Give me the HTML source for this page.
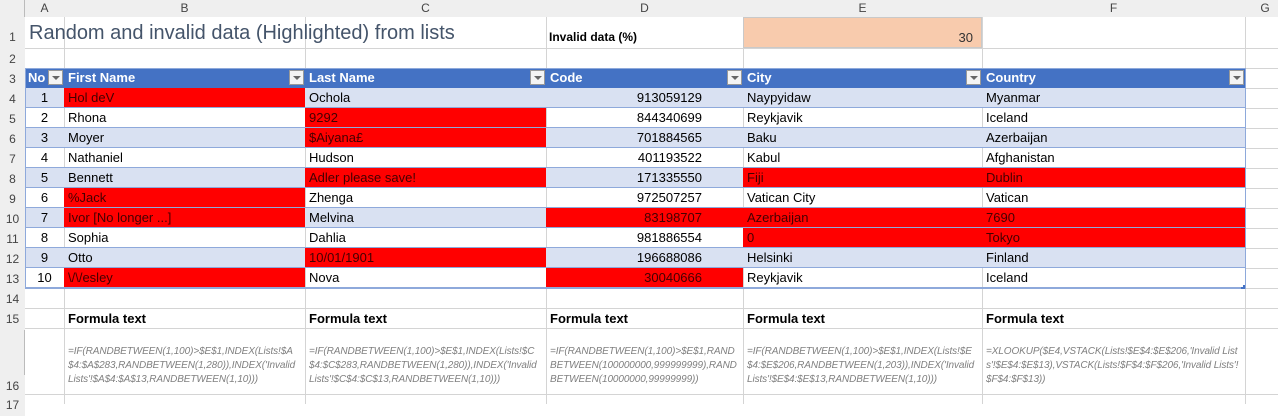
<!DOCTYPE html><html><head><style>
body{margin:0;width:1278px;height:404px;overflow:hidden;background:#fff;font-family:"Liberation Sans",sans-serif;font-size:13px;position:relative}
div{position:absolute;box-sizing:border-box;white-space:nowrap;overflow:hidden}
.h{background:#efefef;color:#444;text-align:center;font-size:12px;line-height:17px}
.rn{background:#efefef;color:#444;text-align:center;font-size:12px;left:0;width:25px}
.c{padding-left:4px;line-height:20px;color:#000}
.hd{background:#4472C4;color:#fff;font-weight:bold}
.b{background:#D9E1F2}
.r{background:#FF0000;color:#400}
.dd{width:15px;height:15px;background:#f4f4f4;border:1px solid #999;top:2px}
.dd:after{content:"";position:absolute;left:3px;top:5px;border-left:4px solid transparent;border-right:4px solid transparent;border-top:4px solid #666}
.f{font-style:italic;color:#808080;font-size:10px;line-height:14px;white-space:normal;padding:17px 2px 0 3px;word-break:break-all;letter-spacing:-0.1px}
</style></head><body>
<div style="left:0;top:0;width:1278px;height:17px;background:#efefef;border-bottom:1px solid #bbb"></div>
<div style="left:0;top:0;width:25px;height:404px;background:#efefef;border-right:1px solid #bbb"></div>
<div class="h" style="left:25px;width:39px;top:0">A</div>
<div class="h" style="left:64px;width:241px;top:0">B</div>
<div class="h" style="left:305px;width:241px;top:0">C</div>
<div class="h" style="left:546px;width:197px;top:0">D</div>
<div class="h" style="left:743px;width:239px;top:0">E</div>
<div class="h" style="left:982px;width:263px;top:0">F</div>
<div class="h" style="left:1245px;width:40px;top:0">G</div>
<svg style="position:absolute;left:0;top:0" width="1278" height="404">
<g stroke="#d4d4d4" stroke-width="1">
<line x1="25" y1="48.5" x2="1278" y2="48.5"/><line x1="25" y1="68.5" x2="1278" y2="68.5"/>
<line x1="25" y1="288.5" x2="1278" y2="288.5"/><line x1="25" y1="308.5" x2="1278" y2="308.5"/>
<line x1="25" y1="328.5" x2="1278" y2="328.5"/><line x1="25" y1="394.5" x2="1278" y2="394.5"/>
<line x1="64.5" y1="17" x2="64.5" y2="404"/><line x1="305.5" y1="17" x2="305.5" y2="404"/>
<line x1="546.5" y1="17" x2="546.5" y2="404"/><line x1="743.5" y1="17" x2="743.5" y2="404"/>
<line x1="982.5" y1="17" x2="982.5" y2="404"/><line x1="1245.5" y1="17" x2="1245.5" y2="404"/>
</g>
<g stroke="#d4d4d4"><line x1="1245" y1="88.5" x2="1278" y2="88.5"/><line x1="1245" y1="108.5" x2="1278" y2="108.5"/><line x1="1245" y1="128.5" x2="1278" y2="128.5"/><line x1="1245" y1="148.5" x2="1278" y2="148.5"/><line x1="1245" y1="168.5" x2="1278" y2="168.5"/><line x1="1245" y1="188.5" x2="1278" y2="188.5"/><line x1="1245" y1="208.5" x2="1278" y2="208.5"/><line x1="1245" y1="228.5" x2="1278" y2="228.5"/><line x1="1245" y1="248.5" x2="1278" y2="248.5"/><line x1="1245" y1="268.5" x2="1278" y2="268.5"/></g>
</svg>
<div class="rn" style="top:17px;height:31px;line-height:40px">1</div>
<div class="rn" style="top:48px;height:20px;line-height:22px">2</div>
<div class="rn" style="top:68px;line-height:22px">3</div>
<div class="rn" style="top:88px;line-height:22px">4</div>
<div class="rn" style="top:108px;line-height:22px">5</div>
<div class="rn" style="top:128px;line-height:22px">6</div>
<div class="rn" style="top:148px;line-height:22px">7</div>
<div class="rn" style="top:168px;line-height:22px">8</div>
<div class="rn" style="top:188px;line-height:22px">9</div>
<div class="rn" style="top:208px;line-height:22px">10</div>
<div class="rn" style="top:228px;line-height:22px">11</div>
<div class="rn" style="top:248px;line-height:22px">12</div>
<div class="rn" style="top:268px;line-height:22px">13</div>
<div class="rn" style="top:288px;line-height:22px">14</div>
<div class="rn" style="top:308px;line-height:22px">15</div>
<div class="rn" style="top:375px;line-height:22px">16</div>
<div class="rn" style="top:394px;line-height:22px">17</div>

<div style="left:29px;top:17px;height:31px;line-height:33px;font-size:20px;color:#44546A;overflow:visible">Random and invalid data (Highlighted) from lists</div>
<div style="left:549px;top:17px;height:31px;line-height:40px;font-size:12px;font-weight:bold">Invalid data (%)</div>
<div style="left:743px;top:17px;width:239px;height:31px;background:#F8CBAD;border:1px solid #c9c9c9;text-align:right;padding-right:8px;line-height:40px;color:#333">30</div>

<div class="c hd" style="top:68px;left:25px;width:39px;height:20px;padding-left:3px">No</div><div class="dd" style="left:48px;top:70px"></div>
<div class="c hd" style="top:68px;left:64px;width:241px;height:20px">First Name</div><div class="dd" style="left:289px;top:70px"></div>
<div class="c hd" style="top:68px;left:305px;width:241px;height:20px">Last Name</div><div class="dd" style="left:530px;top:70px"></div>
<div class="c hd" style="top:68px;left:546px;width:197px;height:20px">Code</div><div class="dd" style="left:727px;top:70px"></div>
<div class="c hd" style="top:68px;left:743px;width:239px;height:20px">City</div><div class="dd" style="left:966px;top:70px"></div>
<div class="c hd" style="top:68px;left:982px;width:263px;height:20px">Country</div><div class="dd" style="left:1229px;top:70px"></div>
<div id="rows"></div>
<script>
var d=[["1","Hol  deV","Ochola","913059129","Naypyidaw","Myanmar","B"],
["2","Rhona","9292","844340699","Reykjavik","Iceland","C"],
["3","Moyer","$Aiyana£","701884565","Baku","Azerbaijan","C"],
["4","Nathaniel","Hudson","401193522","Kabul","Afghanistan",""],
["5","Bennett","Adler please save!","171335550","Fiji","Dublin","CEF"],
["6","%Jack","Zhenga","972507257","Vatican City","Vatican","B"],
["7","Ivor [No longer ...]","Melvina","83198707","Azerbaijan","7690","BDEF"],
["8","Sophia","Dahlia","981886554","0","Tokyo","EF"],
["9","Otto","10/01/1901","196688086","Helsinki","Finland","C"],
["10","\\/\\/esley","Nova","30040666","Reykjavik","Iceland","BD"]];
var L=[25,64,305,546,743,982,1245],K="ABCDEF",h="";
d.forEach(function(r,i){var y=88+i*20;for(var j=0;j<6;j++){var cls="c";if(r[6].indexOf(K[j])>=0)cls+=" r";else if(i%2==0)cls+=" b";
var st="top:"+y+"px;left:"+L[j]+"px;width:"+(L[j+1]-L[j])+"px;height:20px;";
if(j==0)st+="text-align:center;padding-left:0;";if(j==3)st+="text-align:right;padding-right:41px;";
st+="border-bottom:1px solid #8EA9DB;";
h+='<div class="'+cls+'" style="'+st+'">'+r[j].replace(/</g,"&lt;")+'</div>';}});
var ft=["=IF(RANDBETWEEN(1,100)>$E$1,INDEX(Lists!$A$4:$A$283,RANDBETWEEN(1,280)),INDEX('Invalid Lists'!$A$4:$A$13,RANDBETWEEN(1,10)))",
"=IF(RANDBETWEEN(1,100)>$E$1,INDEX(Lists!$C$4:$C$283,RANDBETWEEN(1,280)),INDEX('Invalid Lists'!$C$4:$C$13,RANDBETWEEN(1,10)))",
"=IF(RANDBETWEEN(1,100)>$E$1,RANDBETWEEN(100000000,999999999),RANDBETWEEN(10000000,99999999))",
"=IF(RANDBETWEEN(1,100)>$E$1,INDEX(Lists!$E$4:$E$206,RANDBETWEEN(1,203)),INDEX('Invalid Lists'!$E$4:$E$13,RANDBETWEEN(1,10)))",
"=XLOOKUP($E4,VSTACK(Lists!$E$4:$E$206,'Invalid Lists'!$E$4:$E$13),VSTACK(Lists!$F$4:$F$206,'Invalid Lists'!$F$4:$F$13))"];
for(var j=1;j<6;j++){h+='<div class="c" style="top:308px;left:'+L[j]+'px;width:'+(L[j+1]-L[j])+'px;height:20px;font-weight:bold;line-height:22px">Formula text</div>';
h+='<div class="f" style="top:328px;left:'+(L[j]+1)+'px;width:'+(L[j+1]-L[j]-1)+'px;height:66px">'+ft[j-1]+'</div>';}
document.getElementById("rows").outerHTML=h;
</script>
<div style="left:25px;top:68px;width:1221px;height:221px;border:1px solid #8EA9DB"></div>
<div style="left:1241px;top:285px;width:4px;height:4px;border-right:2px solid #4472C4;border-bottom:2px solid #4472C4"></div>
</body></html>
